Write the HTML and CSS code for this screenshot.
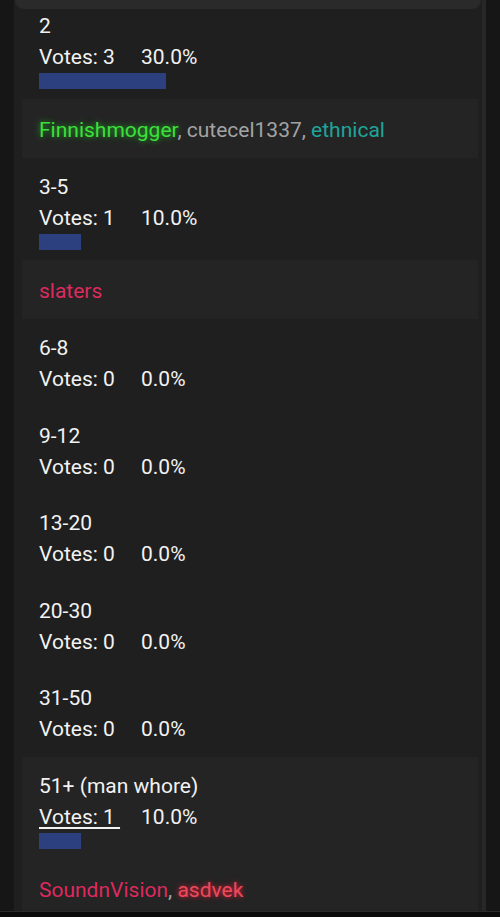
FILE: index.html
```html
<!DOCTYPE html>
<html>
<head>
<meta charset="utf-8">
<link rel="stylesheet" href="styles.css">
</head>
<body>
<div class="card">
  <div class="top-strip"></div>
  <div class="list">
    <div class="option cut">
      <div class="line">2</div>
      <div class="line"><span class="votes">Votes: 3</span><span class="pct">30.0%</span></div>
      <div class="bar" style="width:127px"></div>
      <div class="voters"><span class="u-green">Finnishmogger</span>, <span class="u-gray">cutecel1337</span>, <span class="u-teal">ethnical</span></div>
    </div>
    <div class="option">
      <div class="line">3-5</div>
      <div class="line"><span class="votes">Votes: 1</span><span class="pct">10.0%</span></div>
      <div class="bar" style="width:42px"></div>
      <div class="voters"><span class="u-pink">slaters</span></div>
    </div>
    <div class="option empty">
      <div class="line">6-8</div>
      <div class="line"><span class="votes">Votes: 0</span><span class="pct">0.0%</span></div>
    </div>
    <div class="option empty">
      <div class="line">9-12</div>
      <div class="line"><span class="votes">Votes: 0</span><span class="pct">0.0%</span></div>
    </div>
    <div class="option empty">
      <div class="line">13-20</div>
      <div class="line"><span class="votes">Votes: 0</span><span class="pct">0.0%</span></div>
    </div>
    <div class="option empty">
      <div class="line">20-30</div>
      <div class="line"><span class="votes">Votes: 0</span><span class="pct">0.0%</span></div>
    </div>
    <div class="option empty">
      <div class="line">31-50</div>
      <div class="line"><span class="votes">Votes: 0</span><span class="pct">0.0%</span></div>
    </div>
    <div class="option mine">
      <div class="line">51+ (man whore)</div>
      <div class="line"><span class="votes voted">Votes: 1&nbsp;</span><span class="pct">10.0%</span></div>
      <div class="bar" style="width:42px"></div>
      <div class="voters"><span class="u-pink">SoundnVision</span>, <span class="u-red">asdvek</span></div>
    </div>
  </div>
</div>
<div class="navbar"></div>
</body>
</html>
```
FILE: styles.css
```css
html, body {
  margin: 0;
  padding: 0;
}
body {
  background: #161616;
  height: 917px;
  overflow: hidden;
  font-family: Roboto, "Noto Sans", sans-serif;
  font-size: 21px;
  color: #f2f2f2;
}
.card {
  margin: 0 14px;
  background: #1f1f1f;
  border-right: 4px solid #272727;
  min-height: 917px;
}
.top-strip {
  height: 9px;
  margin: 0 1px;
  background: #2a2a2a;
  border-radius: 0 0 12px 12px;
}
.list {
  padding: 0 4px 0 8px;
}
.option {
  padding-top: 14px;
}
.option.cut {
  padding-top: 2px;
}
.option.empty {
  padding-bottom: 11.5px;
}
.option.mine {
  background: #242424;
}
.line {
  line-height: 31px;
  padding: 0 17px;
  white-space: nowrap;
}
.votes {
  display: inline-block;
  min-width: 102px;
}
.votes.voted {
  min-width: 0;
  margin-right: 21px;
  text-decoration: underline;
  text-underline-offset: 3px;
  text-decoration-thickness: 2px;
}
.bar {
  height: 16px;
  margin-left: 17px;
  background: #2c4080;
}
.voters {
  margin-top: 10px;
  background: #242424;
  padding: 16px 17px 12px;
  line-height: 31px;
  color: #a3a3a3;
  white-space: nowrap;
}
.u-green {
  color: #3be03b;
  text-shadow: 0 0 6px rgba(40, 220, 40, 0.75);
}
.u-gray {
  color: #a3a3a3;
}
.u-teal {
  color: #1fa49a;
}
.u-pink {
  color: #de2a5e;
}
.u-red {
  color: #ec4a5c;
  text-shadow: 0 0 5px rgba(255, 30, 60, 0.9);
}
.navbar {
  position: fixed;
  left: 0;
  right: 0;
  bottom: 0;
  height: 5px;
  background: #0b0b0b;
  border-top: 1px solid #2b2b2b;
}
```
